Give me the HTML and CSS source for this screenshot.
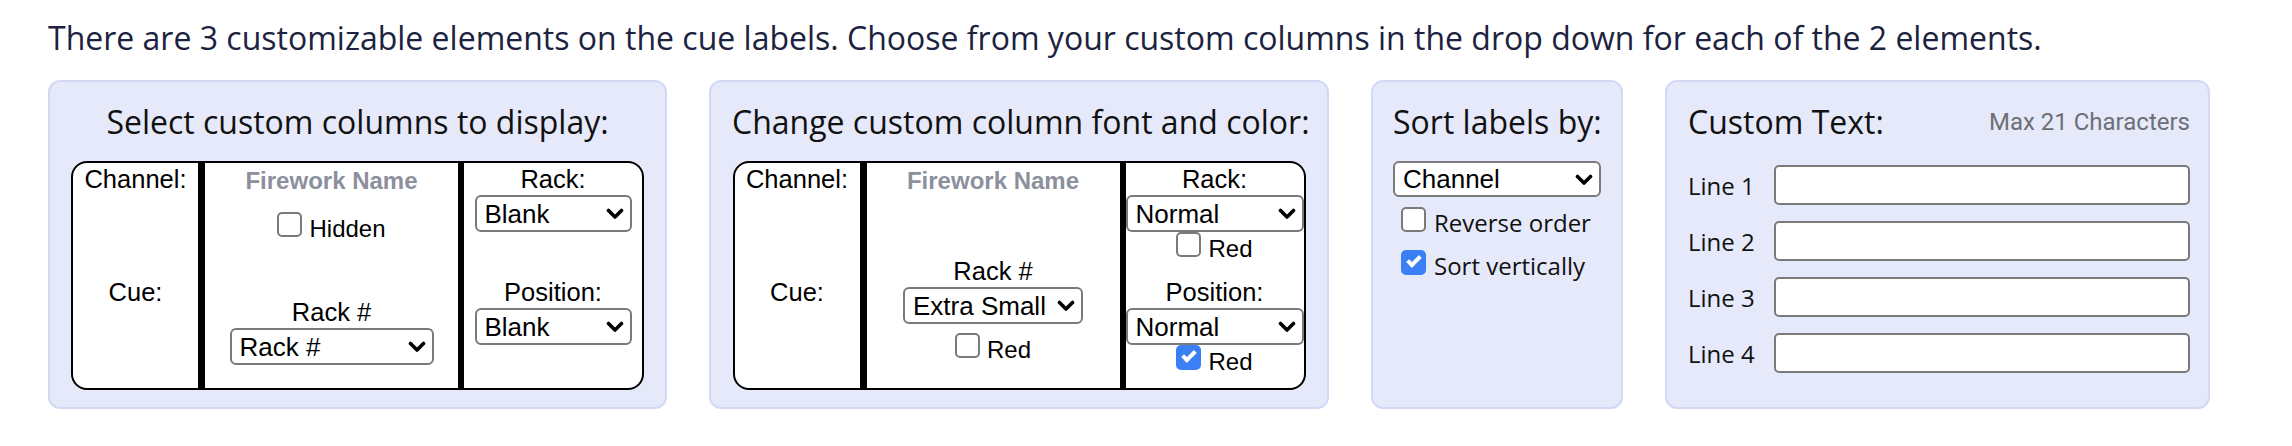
FILE: index.html
```html
<!DOCTYPE html>
<html lang="en">
<head>
<meta charset="utf-8">
<title>Cue label settings</title>
<link rel="stylesheet" href="styles.css">
</head>
<body>
<div class="page">
  <p class="intro">There are 3 customizable elements on the cue labels. Choose from your custom columns in the drop down for each of the 2 elements.</p>
  <div class="panels">
    <section class="panel panel-cols panel-display">
      <h2 class="panel-title">Select custom columns to display:</h2>
      <div class="label-box">
        <div class="col col-id">
          <div class="cell">Channel:</div>
          <div class="cell">Cue:</div>
        </div>
        <div class="col col-name name-display">
          <div class="fw-name">Firework Name</div>
          <label class="check check-arial hidden-row"><input type="checkbox"><span>Hidden</span></label>
          <div class="rack-num">Rack #</div>
          <div class="sel sel-rack">
            <select><option>Rack #</option></select>
            <svg class="chev" viewBox="0 0 18 12" width="18" height="12"><path d="M2.5 2.5 L9 9 L15.5 2.5"/></svg>
          </div>
        </div>
        <div class="col col-extra">
          <div class="cell">
            <div class="lbl">Rack:</div>
            <div class="sel sel-blank">
              <select><option>Blank</option></select>
              <svg class="chev" viewBox="0 0 18 12" width="18" height="12"><path d="M2.5 2.5 L9 9 L15.5 2.5"/></svg>
            </div>
          </div>
          <div class="cell">
            <div class="lbl">Position:</div>
            <div class="sel sel-blank">
              <select><option>Blank</option></select>
              <svg class="chev" viewBox="0 0 18 12" width="18" height="12"><path d="M2.5 2.5 L9 9 L15.5 2.5"/></svg>
            </div>
          </div>
        </div>
      </div>
    </section>

    <section class="panel panel-cols panel-font">
      <h2 class="panel-title">Change custom column font and color:</h2>
      <div class="label-box">
        <div class="col col-id">
          <div class="cell">Channel:</div>
          <div class="cell">Cue:</div>
        </div>
        <div class="col col-name name-font">
          <div class="fw-name">Firework Name</div>
          <div class="rack-num">Rack #</div>
          <div class="sel sel-size">
            <select><option>Extra Small</option></select>
            <svg class="chev" viewBox="0 0 18 12" width="18" height="12"><path d="M2.5 2.5 L9 9 L15.5 2.5"/></svg>
          </div>
          <label class="check check-arial red-row"><input type="checkbox"><span>Red</span></label>
        </div>
        <div class="col col-extra">
          <div class="cell">
            <div class="lbl">Rack:</div>
            <div class="sel sel-full">
              <select><option>Normal</option></select>
              <svg class="chev" viewBox="0 0 18 12" width="18" height="12"><path d="M2.5 2.5 L9 9 L15.5 2.5"/></svg>
            </div>
            <label class="check check-arial"><input type="checkbox"><span>Red</span></label>
          </div>
          <div class="cell">
            <div class="lbl">Position:</div>
            <div class="sel sel-full">
              <select><option>Normal</option></select>
              <svg class="chev" viewBox="0 0 18 12" width="18" height="12"><path d="M2.5 2.5 L9 9 L15.5 2.5"/></svg>
            </div>
            <label class="check check-arial"><input type="checkbox" checked><span>Red</span></label>
          </div>
        </div>
      </div>
    </section>

    <section class="panel panel-sort">
      <h2 class="panel-title">Sort labels by:</h2>
      <div class="sel sel-sort">
        <select><option>Channel</option></select>
        <svg class="chev" viewBox="0 0 18 12" width="18" height="12"><path d="M2.5 2.5 L9 9 L15.5 2.5"/></svg>
      </div>
      <label class="check check-open reverse-row"><input type="checkbox"><span>Reverse order</span></label>
      <label class="check check-open vertical-row"><input type="checkbox" checked><span>Sort vertically</span></label>
    </section>

    <section class="panel panel-text">
      <div class="ct-head">
        <h2 class="panel-title">Custom Text:</h2>
        <span class="max-note">Max 21 Characters</span>
      </div>
      <div class="ct-row first"><label class="ct-label">Line 1</label><input class="ct-input" type="text"></div>
      <div class="ct-row"><label class="ct-label">Line 2</label><input class="ct-input" type="text"></div>
      <div class="ct-row"><label class="ct-label">Line 3</label><input class="ct-input" type="text"></div>
      <div class="ct-row"><label class="ct-label">Line 4</label><input class="ct-input" type="text"></div>
    </section>
  </div>
</div>
</body>
</html>
```
FILE: styles.css
```css
html, body {
  margin: 0;
  padding: 0;
  background: #ffffff;
}

body {
  font-family: "Open Sans", "Noto Sans", sans-serif;
  color: #111111;
}

.page {
  padding: 17px 48px 0;
}

.intro {
  margin: 0;
  font-size: 32px;
  line-height: 42px;
  color: #1c2340;
  white-space: nowrap;
}

.panels {
  display: flex;
  align-items: flex-start;
  gap: 42px;
  margin-top: 21px;
}

.panel {
  box-sizing: border-box;
  height: 329px;
  background: #e6e9f9;
  border: 2px solid #d3d9f5;
  border-radius: 12px;
  padding: 19px 21px 0;
}

.panel-display { width: 619px; }
.panel-font { width: 620px; }
.panel-sort { width: 252px; padding: 19px 20px 0; }
.panel-text { width: 545px; padding: 19px 18px 0 21px; }

.panel-title {
  margin: 0;
  font-size: 32px;
  line-height: 41px;
  font-weight: 400;
  color: #111111;
  white-space: nowrap;
}

.panel-cols .panel-title {
  text-align: center;
}

/* label preview box */
.label-box {
  box-sizing: border-box;
  width: 573px;
  height: 229px;
  margin: 19px auto 0;
  border: 2px solid #000000;
  border-radius: 16px;
  background: #ffffff;
  overflow: hidden;
  display: grid;
  grid-template-columns: 125px 260px 184px;
  font-family: "Liberation Sans", Arial, sans-serif;
  font-size: 25.5px;
  line-height: 28px;
  color: #000000;
}

.col-id,
.col-extra {
  display: grid;
  grid-template-rows: 115px 1fr;
  text-align: center;
}

.col-id .cell:first-child,
.col-extra .cell:first-child {
  padding-top: 2px;
}

.col-extra {
  border-left: 6px solid #000000;
}

.col-extra .cell {
  display: flex;
  flex-direction: column;
  align-items: center;
}

.col-extra .sel {
  margin-top: 2px;
}

.col-name {
  border-left: 7px solid #000000;
  display: flex;
  flex-direction: column;
  align-items: center;
  padding-top: 4px;
}

.fw-name {
  font-size: 24px;
  font-weight: 700;
  color: #8b909c;
}

.name-display .hidden-row { margin-top: 17px; }
.name-display .rack-num { margin-top: 55px; }
.name-font .rack-num { margin-top: 62px; }
.rack-num + .sel { margin-top: 2px; }
.name-font .red-row { margin-top: 9px; }

/* selects */
.sel {
  position: relative;
  height: 37px;
}

.sel select {
  box-sizing: border-box;
  width: 100%;
  height: 37px;
  margin: 0;
  padding: 0 32px 0 8px;
  -webkit-appearance: none;
  appearance: none;
  background: #ffffff;
  border: 2px solid #7a7a7a;
  border-radius: 6px;
  font-family: "Liberation Sans", Arial, sans-serif;
  font-size: 26px;
  color: #000000;
}

.chev {
  position: absolute;
  right: 8px;
  top: 13px;
  pointer-events: none;
}

.chev path {
  fill: none;
  stroke: #000000;
  stroke-width: 3.6;
  stroke-linecap: round;
  stroke-linejoin: round;
}

.sel-rack { width: 204px; }
.sel-blank { width: 157px; }
.sel-size { width: 180px; }
.sel-size select { padding-right: 26px; }
.sel-full { width: 178px; }
.sel-sort { width: 208px; height: 36px; margin-top: 19px; }
.sel-sort select { height: 36px; }

/* checkboxes */
.check {
  display: flex;
  align-items: flex-end;
  line-height: 28px;
  white-space: nowrap;
}

.check input {
  -webkit-appearance: none;
  appearance: none;
  box-sizing: border-box;
  flex: none;
  width: 25px;
  height: 25px;
  margin: 0 7px 6px 0;
  background: #ffffff;
  border: 2px solid #7a7a7a;
  border-radius: 5px;
}

.check input:checked {
  background: #3a7ff3;
  border-color: #3a7ff3;
}

.check input:checked::after {
  content: "";
  display: block;
  box-sizing: border-box;
  width: 8px;
  height: 14px;
  margin: 1px auto 0;
  border: solid #ffffff;
  border-width: 0 4px 4px 0;
  transform: rotate(45deg);
}

.check-arial {
  font-family: "Liberation Sans", Arial, sans-serif;
  font-size: 24px;
}

.check-open {
  font-family: "Open Sans", sans-serif;
  font-size: 24px;
  color: #111111;
}

.check-open input {
  margin: 0 8px 5px 8px;
}

.reverse-row { margin-top: 10px; }
.vertical-row { margin-top: 13px; }

/* custom text */
.ct-head {
  display: flex;
  align-items: center;
  justify-content: space-between;
}

.max-note {
  font-family: Roboto, sans-serif;
  font-size: 24px;
  color: #6c6f75;
}

.ct-row {
  display: flex;
  align-items: center;
  margin-top: 16px;
}

.ct-row.first {
  margin-top: 23px;
}

.ct-label {
  width: 86px;
  flex: none;
  font-size: 24px;
  color: #111111;
}

.ct-input {
  box-sizing: border-box;
  width: 416px;
  height: 40px;
  margin: 0;
  background: #ffffff;
  border: 2px solid #7a7a7a;
  border-radius: 5px;
}
```
